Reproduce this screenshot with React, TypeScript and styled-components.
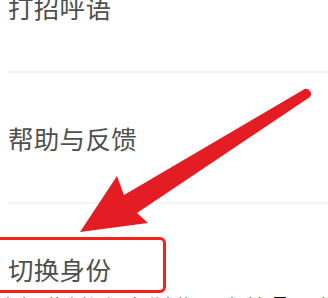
import styled, { createGlobalStyle } from "styled-components";

const GlobalStyle = createGlobalStyle`
  html, body {
    margin: 0;
    padding: 0;
    background: #ffffff;
  }
  * {
    box-sizing: border-box;
  }
`;

const Page = styled.div`
  width: 328px;
  font-family: "Noto Sans CJK SC", "Noto Sans", sans-serif;
`;

const Screenshot = styled.div`
  position: relative;
  height: 294px;
  overflow: hidden;
  background: #ffffff;
`;

const MenuList = styled.ul`
  list-style: none;
  margin: -58px 0 0 0;
  padding: 0;
`;

const MenuRow = styled.li`
  height: 131px;
  margin-left: 8px;
  display: flex;
  align-items: center;
  border-bottom: 2px solid #f4f4f4;
  font-size: 25.5px;
  color: #4f4f4f;
  letter-spacing: 0.3px;
`;

const Highlight = styled.div`
  position: absolute;
  left: -10px;
  top: 237px;
  width: 176px;
  height: 56px;
  border: 3px solid #f5221b;
  border-radius: 6px;
`;

const ArrowLayer = styled.svg`
  position: absolute;
  left: 0;
  top: 0;
`;

const Caption = styled.p`
  margin: 2px 0 0 0;
  font-size: 16px;
  line-height: 16px;
  color: #111111;
  white-space: nowrap;
  overflow: hidden;
`;

const items = ["打招呼语", "帮助与反馈", "切换身份"];

export default function App() {
  return (
    <Page>
      <GlobalStyle />
      <Screenshot>
        <MenuList>
          {items.map((label) => (
            <MenuRow key={label}>{label}</MenuRow>
          ))}
        </MenuList>
        <Highlight />
        <ArrowLayer width="328" height="294" viewBox="0 0 328 294">
          <path
            d="M80 232 L117 176 L124 195 L303 90 A5 5 0 0 1 310 97 L137 213 L148 223 Z"
            fill="#e41d24"
          />
        </ArrowLayer>
      </Screenshot>
      <Caption>点击切换身份后，在弹出的页面中选择需要切换的身份即可。</Caption>
    </Page>
  );
}
